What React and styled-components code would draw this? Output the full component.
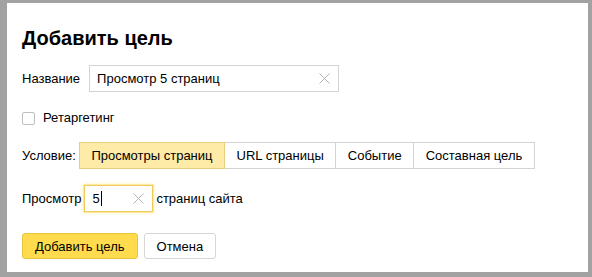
import React from 'react'
import styled, { createGlobalStyle } from 'styled-components'

const GlobalStyle = createGlobalStyle`
  html, body {
    margin: 0;
    padding: 0;
    background: #a2a2a2;
  }
  body {
    font-family: "Liberation Sans", Arial, sans-serif;
    font-size: 13px;
    color: #000;
  }
`

const Backdrop = styled.div`
  width: 592px;
  height: 277px;
  overflow: hidden;
  background: #a2a2a2;
  box-sizing: border-box;
  padding: 3px 4px 5px 7px;
`

const Modal = styled.div`
  height: 100%;
  box-sizing: border-box;
  background: #fff;
  padding: 23px 15px 0 15px;
  display: flex;
  flex-direction: column;
  align-items: flex-start;
`

const Title = styled.h2`
  margin: 0;
  font-size: 20px;
  line-height: 24px;
  font-weight: bold;
`

const Row = styled.div`
  display: flex;
  align-items: center;
  gap: ${p => p.gap || 7}px;
  margin-top: ${p => p.top}px;
`

const Label = styled.span`
  line-height: 16px;
  white-space: nowrap;
`

const Field = styled.div`
  display: flex;
  align-items: center;
  box-sizing: border-box;
  width: ${p => p.width}px;
  height: 27px;
  padding: 0 8px 0 7px;
  border: 1px solid ${p => (p.focused ? '#f0cb5c' : '#d3d3d3')};
  box-shadow: ${p => (p.focused ? '0 0 0 1px rgba(255, 215, 80, 0.35), 0 0 4px rgba(255, 204, 0, 0.45)' : 'none')};
  background: #fff;
`

const FieldText = styled.span`
  flex: 1;
  line-height: 16px;
  white-space: nowrap;
`

const Caret = styled.span`
  display: inline-block;
  width: 1px;
  height: 15px;
  margin-left: 1px;
  vertical-align: -3px;
  background: #000;
`

const Clear = styled.svg`
  width: 11px;
  height: 11px;
  flex: none;
`

const Checkbox = styled.span`
  display: inline-block;
  box-sizing: border-box;
  width: 13px;
  height: 13px;
  border: 1px solid #bdbdbd;
  border-radius: 2px;
  background: #fff;
`

const Tabs = styled.div`
  display: flex;
  height: 27px;
`

const Tab = styled.div`
  display: flex;
  align-items: center;
  box-sizing: border-box;
  height: 27px;
  padding: 0 11.5px;
  border: 1px solid ${p => (p.active ? '#e7cd7e' : '#d3d3d3')};
  margin-left: -1px;
  background: ${p => (p.active ? '#feeba8' : '#fff')};
  position: relative;
  z-index: ${p => (p.active ? 1 : 0)};
  white-space: nowrap;
  &:first-child {
    margin-left: 0;
  }
`

const Button = styled.button`
  box-sizing: border-box;
  height: 26px;
  padding: 0 12px;
  font-family: inherit;
  font-size: 13px;
  color: #000;
  border-radius: 3px;
  border: 1px solid ${p => (p.primary ? '#e6c43d' : '#d6d6d6')};
  background: ${p => (p.primary ? '#ffdb4d' : '#fff')};
`

const ClearIcon = () => (
  <Clear viewBox="0 0 11 11">
    <path d="M0.5 0.5 L10.5 10.5 M10.5 0.5 L0.5 10.5" stroke="#b3b3b3" strokeWidth="1" fill="none" />
  </Clear>
)

const tabs = ['Просмотры страниц', 'URL страницы', 'Событие', 'Составная цель']

export default function App() {
  return (
    <>
      <GlobalStyle />
      <Backdrop>
        <Modal>
          <Title>Добавить цель</Title>
          <Row top={15} gap={9}>
            <Label>Название</Label>
            <Field width={250}>
              <FieldText>Просмотр 5 страниц</FieldText>
              <ClearIcon />
            </Field>
          </Row>
          <Row top={18} gap={8}>
            <Checkbox />
            <Label>Ретаргетинг</Label>
          </Row>
          <Row top={16} gap={3}>
            <Label>Условие:</Label>
            <Tabs>
              {tabs.map((t, i) => (
                <Tab key={t} active={i === 0}>{t}</Tab>
              ))}
            </Tabs>
          </Row>
          <Row top={16} gap={3}>
            <Label>Просмотр</Label>
            <Field width={69} focused>
              <FieldText>5<Caret /></FieldText>
              <ClearIcon />
            </Field>
            <Label>страниц сайта</Label>
          </Row>
          <Row top={21} gap={6}>
            <Button primary>Добавить цель</Button>
            <Button>Отмена</Button>
          </Row>
        </Modal>
      </Backdrop>
    </>
  )
}
